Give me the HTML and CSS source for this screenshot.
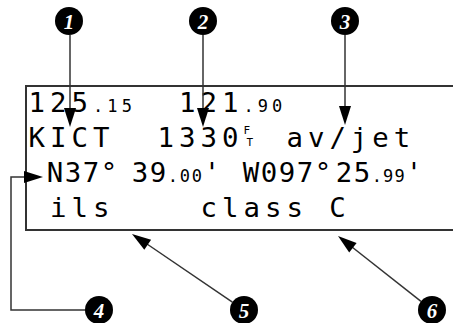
FILE: index.html
```html
<!DOCTYPE html>
<html>
  <head>
  <meta charset="utf-8">
  <title>Airport page</title>
  <link rel="stylesheet" href="styles.css">
  </head>
  <body>

<div class="figure">

  <div class="screen">
    <div class="rows">
      <div class="row">125<span class="sm">.15</span>  121<span class="sm">.90</span></div>
      <div class="row">KICT  1330<span class="ft"><span>F</span><span>T</span></span> av/jet</div>
      <div class="row tight"><span>N37°</span><span class="gap-a">39</span><span class="sm sm-t">.00</span><span>'</span><span class="gap-b">W097°</span><span class="gap-c">25</span><span class="sm sm-e">.99</span><span>'</span></div>
      <div class="row"> ils    class C</div>
    </div>
  </div>

  <!-- callouts -->
  <svg class="callouts" width="453" height="323" viewBox="0 0 453 323">
    <g class="lead">
      <line x1="70" y1="35" x2="70" y2="110"/>
      <line x1="203" y1="35" x2="203" y2="110"/>
      <line x1="345" y1="35" x2="345" y2="108"/>
      <polyline points="85,310 11,310 11,177 26,177"/>
      <line x1="232.4" y1="302.1" x2="147" y2="244"/>
      <line x1="421" y1="301.3" x2="352" y2="247"/>
    </g>
    <g class="head">
      <polygon points="64,108 76,108 70,127"/>
      <polygon points="197,108 209,108 203,127"/>
      <polygon points="339,106 351,106 345,125"/>
      <polygon points="24,171 24,183 43,177"/>
      <polygon points="144.3,249.7 151.1,239.7 132,234"/>
      <polygon points="349.2,252.5 356.6,243.1 338,236"/>
    </g>
    <g class="badge">
      <circle cx="69" cy="21" r="14"/>
      <circle cx="203" cy="21" r="14"/>
      <circle cx="345" cy="21" r="14"/>
      <circle cx="99" cy="310" r="14"/>
      <circle cx="244" cy="310" r="14"/>
      <circle cx="432" cy="310" r="14"/>
    </g>
    <g class="num">
      <text x="69" y="29">1</text>
      <text x="203" y="29">2</text>
      <text x="345" y="29">3</text>
      <text x="99" y="318">4</text>
      <text x="244" y="318">5</text>
      <text x="432" y="318">6</text>
    </g>
  </svg>

</div>

  </body>
</html>
```

FILE: styles.css
```css
body {margin:0; background-color:#fff;}
.figure {position:relative; width:453px; height:323px; overflow:hidden;}

.screen {margin:85px 0 0 25px; width:460px; height:142px; border:2px solid #333; border-right:none; font-family:"DejaVu Sans Mono", monospace; color:#000;}
.rows {margin-top:-2px;}
.row {height:35px; line-height:35px; font-size:27.4px; white-space:pre; letter-spacing:5px; padding-left:1.5px;}
.row.tight {letter-spacing:1.5px; padding-left:19.75px;}

.sm {font-size:17px; letter-spacing:4.1px;}
.sm-t {letter-spacing:1.8px;}
.sm-e {letter-spacing:1.1px;}
.gap-a {margin-left:13px;}
.gap-b {margin-left:21px;}
.gap-c {margin-left:3px;}

.ft {display:inline-flex; flex-direction:column; gap:2px; vertical-align:top; width:21.5px; height:35px; padding-top:6px; box-sizing:border-box; font-size:11px; line-height:10px; letter-spacing:0;}
.ft span + span {padding-left:3px;}

.callouts {position:absolute; left:0; top:0;}
.lead {stroke:#333; stroke-width:1.5; fill:none;}
.head {fill:#000;}
.badge {fill:#000;}
.num {fill:#fff; font:bold italic 21px "Liberation Serif", serif; text-anchor:middle;}
```
